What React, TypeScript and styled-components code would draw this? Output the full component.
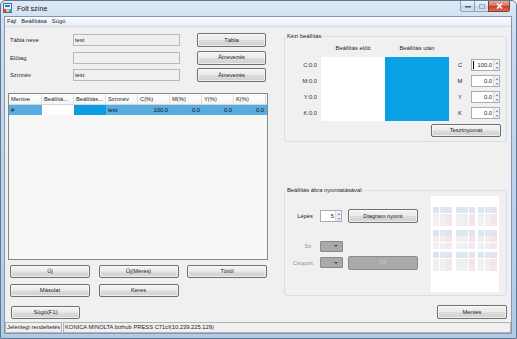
import React from 'react';
import styled, { createGlobalStyle } from 'styled-components';

const GlobalStyle = createGlobalStyle`
  html, body {
    margin: 0;
    padding: 0;
    background: #ffffff;
  }
  body {
    font-family: "Liberation Sans", Arial, sans-serif;
    font-size: 5.8px;
    color: #1e1e1e;
  }
  * {
    box-sizing: border-box;
  }
`;

const Window = styled.div`
  width: 517px;
  height: 339px;
  display: flex;
  flex-direction: column;
  padding: 0 4px 4px 3px;
  border: 1px solid #5f7896;
  border-radius: 5px 5px 0 0;
  background: linear-gradient(180deg, #dde8f5 0%, #c9dbef 10%, #bcd2ea 60%, #b3cbe6 100%);
`;

const TitleBar = styled.div`
  height: 15px;
  margin: 0 -4px 0 -3px;
  padding: 0 6px 0 2px;
  display: flex;
  align-items: flex-start;
`;

const TitleIcon = styled.svg`
  width: 10px;
  height: 11px;
  margin-top: 2px;
  flex-shrink: 0;
`;

const TitleText = styled.span`
  margin-left: 4px;
  margin-top: 4px;
  font-size: 7px;
  line-height: 8px;
  color: #111;
`;

const Controls = styled.div`
  margin-left: auto;
  display: flex;
  height: 11px;
`;

const CtrlBtn = styled.div<{ $close?: boolean }>`
  width: ${({ $close }) => ($close ? '22px' : '15px')};
  height: 11px;
  display: flex;
  align-items: center;
  justify-content: center;
  border: 1px solid ${({ $close }) => ($close ? '#8b3a33' : '#8da2bb')};
  border-top: none;
  margin-left: -1px;
  border-radius: ${({ $close }) => ($close ? '0 0 3px 0' : '0')};
  background: ${({ $close }) =>
    $close
      ? 'linear-gradient(180deg, #e9a99c 0%, #d7705f 45%, #c4402b 55%, #d86b55 100%)'
      : 'linear-gradient(180deg, #eef3f9 0%, #dae5f1 45%, #c6d6e9 55%, #d4e1f0 100%)'};
  &:first-child {
    border-radius: 0 0 0 3px;
  }
`;

const Client = styled.div`
  flex: 1;
  display: flex;
  flex-direction: column;
  border: 1px solid #8397b1;
  background: #f0f0f0;
  min-height: 0;
`;

const MenuBar = styled.div`
  height: 10px;
  display: flex;
  align-items: center;
  gap: 5px;
  padding-left: 2px;
  background: linear-gradient(180deg, #fbfcfe 0%, #f0f4fa 60%, #e6edf6 100%);
  border-bottom: 1px solid #d2dcea;
`;

const MenuItem = styled.span`
  line-height: 7px;
`;

const Content = styled.div`
  flex: 1;
  display: flex;
  gap: 16px;
  padding: 6px 3px 2px 3px;
  min-height: 0;
`;

const LeftCol = styled.div`
  width: 260px;
  display: flex;
  flex-direction: column;
`;

const RightCol = styled.div`
  width: 223px;
  display: flex;
  flex-direction: column;
`;

const FormGrid = styled.div`
  display: grid;
  grid-template-columns: 65px 107px 17px 69px;
  grid-auto-rows: 14px;
  row-gap: 3.5px;
  align-items: center;
`;

const FieldLabel = styled.span`
  padding-left: 2px;
`;

const Field = styled.div`
  height: 12px;
  border: 1px solid #b9b9b9;
  background: #f0f0f0;
  padding-left: 1px;
  line-height: 10px;
`;

const Btn = styled.button<{ $w?: number; $h?: number }>`
  width: ${({ $w }) => ($w ? `${$w}px` : '100%')};
  height: ${({ $h }) => ($h ? `${$h}px` : '14px')};
  margin: 0;
  padding: 0;
  font: inherit;
  color: #1e1e1e;
  border: 1px solid #707070;
  border-radius: 2px;
  background: linear-gradient(180deg, #f3f3f3 0%, #ebebeb 48%, #dddddd 52%, #d0d0d0 100%);
  box-shadow: inset 0 0 0 1px rgba(255, 255, 255, 0.6);
  display: flex;
  align-items: center;
  justify-content: center;
  line-height: 7px;
  &:disabled {
    color: #c9c9c9;
    border-color: #8c8c8c;
    background: #a9a9a9;
    box-shadow: none;
  }
`;

const Table = styled.div`
  margin-top: 11px;
  height: 167px;
  border: 1px solid #828790;
  background: #f7f7f7;
  display: flex;
  flex-direction: column;
`;

const HeadRow = styled.div`
  display: grid;
  grid-template-columns: 33px repeat(7, 32px);
  height: 11px;
  background: linear-gradient(180deg, #ffffff 0%, #f3f4f6 100%);
  border-bottom: 1px solid #d5d5d5;
`;

const HeadCell = styled.div`
  padding-left: 2px;
  border-right: 1px solid #dedede;
  line-height: 10px;
  white-space: nowrap;
  overflow: hidden;
`;

const DataRow = styled.div`
  display: grid;
  grid-template-columns: 33px repeat(7, 32px);
  height: 10px;
  background: #58ace0;
`;

const DataCell = styled.div<{ $bg?: string; $right?: boolean }>`
  padding: 0 2px;
  line-height: 10px;
  text-align: ${({ $right }) => ($right ? 'right' : 'left')};
  background: ${({ $bg }) => $bg || 'transparent'};
  color: #111;
`;

const ButtonGrid = styled.div`
  margin-top: 5px;
  padding-left: 2px;
  display: grid;
  grid-template-columns: repeat(3, 80px);
  grid-auto-rows: 13px;
  column-gap: 8.5px;
  row-gap: 6px;
`;

const HelpRow = styled.div`
  margin-top: 9px;
  padding-left: 3px;
`;

const Group = styled.fieldset`
  margin: 0;
  padding: 0;
  min-width: 0;
  border: 1px solid #d5dfe5;
  border-radius: 3px;
  display: flex;
  flex-direction: column;
`;

const Legend = styled.legend`
  margin-left: 1px;
  padding: 0 1px;
  line-height: 7px;
`;

const ManualGrid = styled.div`
  margin-top: 3px;
  display: grid;
  grid-template-columns: 36px 64px 64px 22px 29px;
  grid-template-rows: 14px repeat(4, 16px);
  align-items: center;
`;

const ColHead = styled.div<{ $col: number }>`
  grid-column: ${({ $col }) => $col};
  grid-row: 1;
  align-self: start;
  line-height: 10px;
  text-align: center;
`;

const ValueLabel = styled.div<{ $row: number }>`
  grid-column: 1;
  grid-row: ${({ $row }) => $row};
  text-align: right;
  padding-right: 4px;
  color: #333;
`;

const Swatch = styled.div<{ $col: number; $color: string }>`
  grid-column: ${({ $col }) => $col};
  grid-row: 2 / span 4;
  align-self: stretch;
  background: ${({ $color }) => $color};
`;

const Letter = styled.div<{ $row: number }>`
  grid-column: 4;
  grid-row: ${({ $row }) => $row};
  text-align: center;
`;

const Spin = styled.div<{ $w: number }>`
  width: ${({ $w }) => $w}px;
  height: 12px;
  display: flex;
  border: 1px solid #abadb3;
  background: #ffffff;
`;

const SpinValue = styled.div`
  flex: 1;
  display: flex;
  align-items: center;
  justify-content: flex-end;
  padding-right: 1px;
  line-height: 10px;
`;

const Caret = styled.span`
  width: 1px;
  height: 8px;
  background: #000;
  margin-right: auto;
  margin-left: 1px;
`;

const SpinArrows = styled.div`
  width: 6px;
  display: flex;
  flex-direction: column;
  border-left: 1px solid #d8dde4;
`;

const SpinArrow = styled.div<{ $up?: boolean }>`
  flex: 1;
  display: flex;
  align-items: center;
  justify-content: center;
  background: linear-gradient(180deg, #f4f7fb, #dfe7f1);
  &::after {
    content: '';
    border-left: 1.5px solid transparent;
    border-right: 1.5px solid transparent;
    ${({ $up }) => ($up ? 'border-bottom' : 'border-top')}: 2px solid #6a7d94;
  }
`;

const TestRow = styled.div`
  margin-top: 3px;
  padding: 0 5px 4px 0;
  display: flex;
  justify-content: flex-end;
`;

const Spacer = styled.div`
  height: 45px;
`;

const DiagramBody = styled.div`
  display: flex;
  align-items: flex-start;
  padding: 2px 7px 3px 0;
`;

const DiagramGrid = styled.div`
  margin-top: 13px;
  display: grid;
  grid-template-columns: 35px 28px 70px;
  grid-template-rows: 14px 12px 14px 15px;
  row-gap: 2px;
  align-items: center;
`;

const CtlLabel = styled.div<{ $row: number; $disabled?: boolean }>`
  grid-column: 1;
  grid-row: ${({ $row }) => $row};
  text-align: right;
  padding-right: 7px;
  color: ${({ $disabled }) => ($disabled ? '#8f8f8f' : '#1e1e1e')};
`;

const Cell = styled.div<{ $row: number; $col: number }>`
  grid-column: ${({ $col }) => $col};
  grid-row: ${({ $row }) => $row};
  display: flex;
  align-items: center;
`;

const Combo = styled.div`
  width: 23px;
  height: 11px;
  border: 1px solid #8a8a8a;
  border-radius: 1px;
  background: #a9a9a9;
  display: flex;
  align-items: center;
  justify-content: flex-end;
  padding-right: 4px;
  &::after {
    content: '';
    border-left: 2px solid transparent;
    border-right: 2px solid transparent;
    border-top: 2.5px solid #4d4d4d;
  }
`;

const Preview = styled.div`
  margin-left: auto;
  width: 68px;
  height: 96px;
  background: #ffffff;
  padding: 11px 2px;
  display: grid;
  grid-template-columns: repeat(3, 19px);
  justify-content: space-between;
  align-content: start;
  row-gap: 3.5px;
`;

const Patch = styled.div`
  display: grid;
  grid-template-columns: repeat(3, 6px);
  grid-auto-rows: 6px;
  gap: 0.5px;
`;

const Chip = styled.div<{ $c: string }>`
  background: ${({ $c }) => $c};
`;

const SaveRow = styled.div`
  margin-top: 9px;
  display: flex;
  justify-content: flex-end;
`;

const StatusBar = styled.div`
  height: 11px;
  display: flex;
  gap: 1px;
`;

const StatusPane = styled.div<{ $grow?: boolean }>`
  ${({ $grow }) => ($grow ? 'flex: 1;' : 'width: 57px;')}
  border: 1px solid #b4b4b4;
  padding-left: 1px;
  line-height: 9px;
  white-space: nowrap;
  overflow: hidden;
`;

const chipColors = [
  '#dde6ee', '#dfe8ef', '#e4e2ec',
  '#f0f0f0', '#efefef', '#f3e4eb',
  '#f1f1f1', '#f0f0f0', '#f3e7ed',
];

const rows = ['C', 'M', 'Y', 'K'];
const values = ['100.0', '0.0', '0.0', '0.0'];

const SpinBox = ({ value, width, caret }: { value: string; width: number; caret?: boolean }) => (
  <Spin $w={width}>
    <SpinValue>
      {caret && <Caret />}
      {value}
    </SpinValue>
    <SpinArrows>
      <SpinArrow $up />
      <SpinArrow />
    </SpinArrows>
  </Spin>
);

const App = () => {
  return (
    <>
      <GlobalStyle />
      <Window>
        <TitleBar>
          <TitleIcon viewBox="0 0 10 11">
            <rect x="0.5" y="0.5" width="8" height="9" fill="#e9f1fb" stroke="#3d6db3" strokeWidth="1" />
            <rect x="2" y="2" width="5" height="2" fill="#2b7fd6" />
            <rect x="0" y="6" width="3" height="3" fill="#e23a3a" />
            <rect x="3" y="6" width="3" height="3" fill="#f3c82c" />
            <rect x="6" y="6" width="3" height="3" fill="#27a7e0" />
          </TitleIcon>
          <TitleText>Folt színe</TitleText>
          <Controls>
            <CtrlBtn>
              <svg width="6" height="3" viewBox="0 0 6 3">
                <rect x="0" y="1" width="6" height="1.5" fill="#4a5e78" />
              </svg>
            </CtrlBtn>
            <CtrlBtn>
              <svg width="6" height="5" viewBox="0 0 6 5">
                <rect x="0.5" y="0.5" width="5" height="4" fill="none" stroke="#9aa9bb" strokeWidth="1" />
              </svg>
            </CtrlBtn>
            <CtrlBtn $close>
              <svg width="7" height="6" viewBox="0 0 7 6">
                <path d="M1 0.5 L6 5.5 M6 0.5 L1 5.5" stroke="#ffffff" strokeWidth="1.6" />
              </svg>
            </CtrlBtn>
          </Controls>
        </TitleBar>

        <Client>
          <MenuBar>
            <MenuItem>Fájl</MenuItem>
            <MenuItem>Beállítása</MenuItem>
            <MenuItem>Súgó</MenuItem>
          </MenuBar>

          <Content>
            <LeftCol>
              <FormGrid>
                <FieldLabel>Tábla neve</FieldLabel>
                <Field>test</Field>
                <span />
                <Btn>Tábla</Btn>
                <FieldLabel>Előtag</FieldLabel>
                <Field />
                <span />
                <Btn>Átnevezés</Btn>
                <FieldLabel>Színnév</FieldLabel>
                <Field>test</Field>
                <span />
                <Btn>Átnevezés</Btn>
              </FormGrid>

              <Table>
                <HeadRow>
                  <HeadCell>Mentve</HeadCell>
                  <HeadCell>Beállítá...</HeadCell>
                  <HeadCell>Beállítás...</HeadCell>
                  <HeadCell>Színnév</HeadCell>
                  <HeadCell>C(%)</HeadCell>
                  <HeadCell>M(%)</HeadCell>
                  <HeadCell>Y(%)</HeadCell>
                  <HeadCell>K(%)</HeadCell>
                </HeadRow>
                <DataRow>
                  <DataCell>#</DataCell>
                  <DataCell $bg="#ffffff" />
                  <DataCell $bg="#0b9de2" />
                  <DataCell>test</DataCell>
                  <DataCell $right>100.0</DataCell>
                  <DataCell $right>0.0</DataCell>
                  <DataCell $right>0.0</DataCell>
                  <DataCell $right>0.0</DataCell>
                </DataRow>
              </Table>

              <ButtonGrid>
                <Btn $h={13}>Új</Btn>
                <Btn $h={13}>Új(Mérés)</Btn>
                <Btn $h={13}>Töröl</Btn>
                <Btn $h={13}>Másolat</Btn>
                <Btn $h={13}>Keres</Btn>
              </ButtonGrid>

              <HelpRow>
                <Btn $w={69} $h={13}>Súgó(F1)</Btn>
              </HelpRow>
            </LeftCol>

            <RightCol>
              <Group>
                <Legend>Kézi beállítás</Legend>
                <ManualGrid>
                  <ColHead $col={2}>Beállítás előtt</ColHead>
                  <ColHead $col={3}>Beállítás után</ColHead>
                  {rows.map((r, i) => (
                    <ValueLabel key={`l${r}`} $row={i + 2}>{r}:0.0</ValueLabel>
                  ))}
                  <Swatch $col={2} $color="#ffffff" />
                  <Swatch $col={3} $color="#0aa0e4" />
                  {rows.map((r, i) => (
                    <Letter key={`r${r}`} $row={i + 2}>{r}</Letter>
                  ))}
                  {rows.map((r, i) => (
                    <Cell key={`s${r}`} $row={i + 2} $col={5}>
                      <SpinBox value={values[i]} width={29} caret={i === 0} />
                    </Cell>
                  ))}
                </ManualGrid>
                <TestRow>
                  <Btn $w={70} $h={13}>Tesztnyomat</Btn>
                </TestRow>
              </Group>

              <Spacer />

              <Group>
                <Legend>Beállítás ábra nyomtatásával</Legend>
                <DiagramBody>
                  <DiagramGrid>
                    <CtlLabel $row={1}>Lépés</CtlLabel>
                    <Cell $row={1} $col={2}>
                      <SpinBox value="5" width={22} />
                    </Cell>
                    <Cell $row={1} $col={3}>
                      <Btn $w={70}>Diagram nyomt</Btn>
                    </Cell>
                    <CtlLabel $row={3} $disabled>Sz.</CtlLabel>
                    <Cell $row={3} $col={2}>
                      <Combo />
                    </Cell>
                    <CtlLabel $row={4} $disabled>Csoport</CtlLabel>
                    <Cell $row={4} $col={2}>
                      <Combo />
                    </Cell>
                    <Cell $row={4} $col={3}>
                      <Btn $w={70} disabled>OK</Btn>
                    </Cell>
                  </DiagramGrid>
                  <Preview>
                    {Array.from({ length: 9 }).map((_, g) => (
                      <Patch key={g}>
                        {chipColors.map((c, k) => (
                          <Chip key={k} $c={c} />
                        ))}
                      </Patch>
                    ))}
                  </Preview>
                </DiagramBody>
              </Group>

              <SaveRow>
                <Btn $w={70}>Mentés</Btn>
              </SaveRow>
            </RightCol>
          </Content>

          <StatusBar>
            <StatusPane>Jelenlegi rendeltetés</StatusPane>
            <StatusPane $grow>KONICA MINOLTA bizhub PRESS C71cf(10.239.225.129)</StatusPane>
          </StatusBar>
        </Client>
      </Window>
    </>
  );
};

export default App;
